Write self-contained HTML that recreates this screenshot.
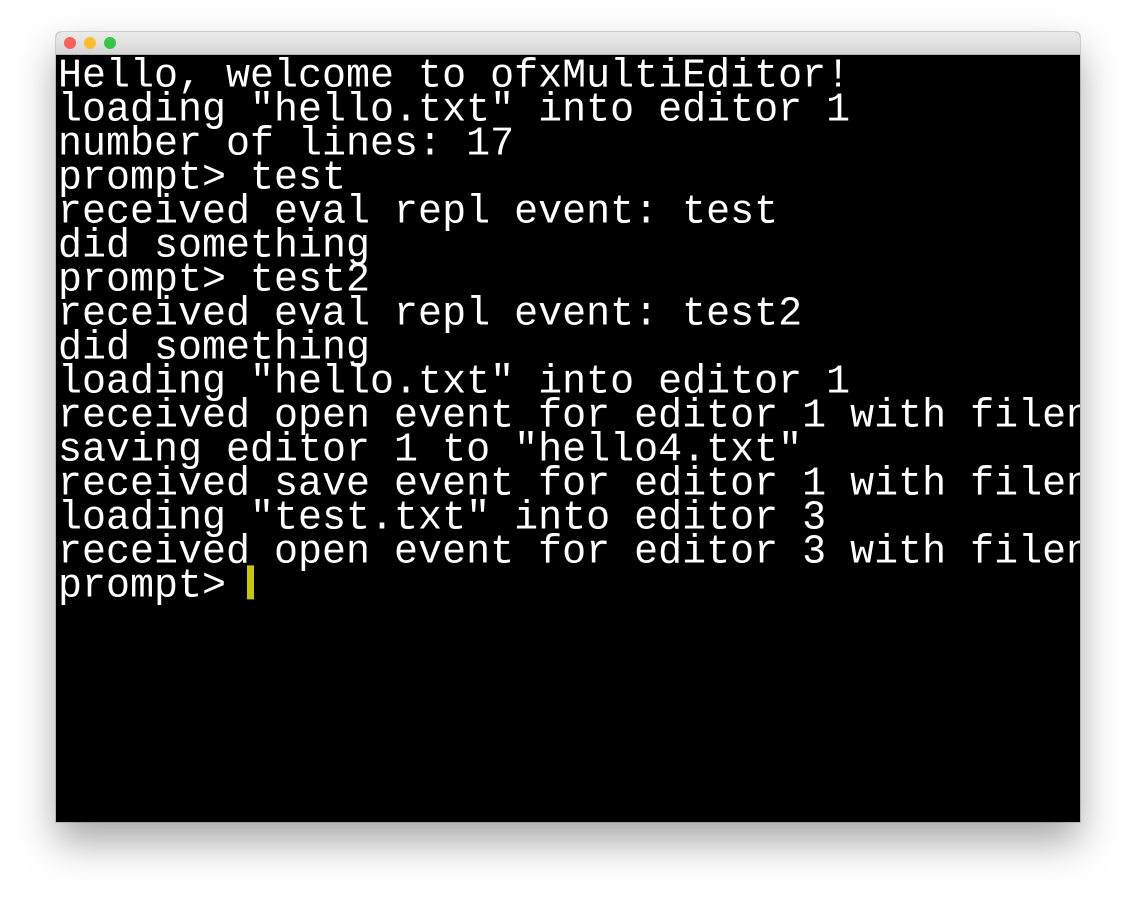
<!DOCTYPE html>
<html><head><meta charset="utf-8"><style>
html,body{margin:0;padding:0;background:#fff;width:1136px;height:902px;overflow:hidden}
.win{position:absolute;left:56px;top:32px;width:1024px;height:790px;border-radius:5px 5px 0 0;box-shadow:0 20px 40px rgba(0,0,0,0.35),0 0 0 1px rgba(0,0,0,0.15);overflow:hidden;background:#000}
.tb{position:absolute;left:0;top:0;width:1024px;height:22px;background:linear-gradient(#ebebeb,#d6d6d6);border-bottom:1px solid #b5b5b5}
.d{position:absolute;top:5px;width:12px;height:12px;border-radius:50%}
.term{position:absolute;left:2px;top:23px;padding-top:5px;width:1022px;height:762px;overflow:hidden;font-family:"Liberation Mono",monospace;font-size:40px;line-height:34px;color:#fff}
.term div{white-space:pre;height:34px;transform:scaleY(1.03);transform-origin:50% 50%}
.cur{display:inline-block;width:7px;height:33px;background:#c8c800;vertical-align:top;margin-left:-3px;position:relative;top:-4px}
</style></head><body>
<div class="win">
<div class="tb"><div class="d" style="left:8px;background:#fc5f57"></div><div class="d" style="left:28px;background:#fdbc2e"></div><div class="d" style="left:48px;background:#33c748"></div></div>
<div class="term"><div>Hello, welcome to ofxMultiEditor!</div><div>loading "hello.txt" into editor 1</div><div>number of lines: 17</div><div>prompt&gt; test</div><div>received eval repl event: test</div><div>did something</div><div>prompt&gt; test2</div><div>received eval repl event: test2</div><div>did something</div><div>loading "hello.txt" into editor 1</div><div>received open event for editor 1 with filename</div><div>saving editor 1 to "hello4.txt"</div><div>received save event for editor 1 with filename</div><div>loading "test.txt" into editor 3</div><div>received open event for editor 3 with filename</div><div>prompt&gt; <span class="cur"></span></div></div>
</div>
</body></html>
